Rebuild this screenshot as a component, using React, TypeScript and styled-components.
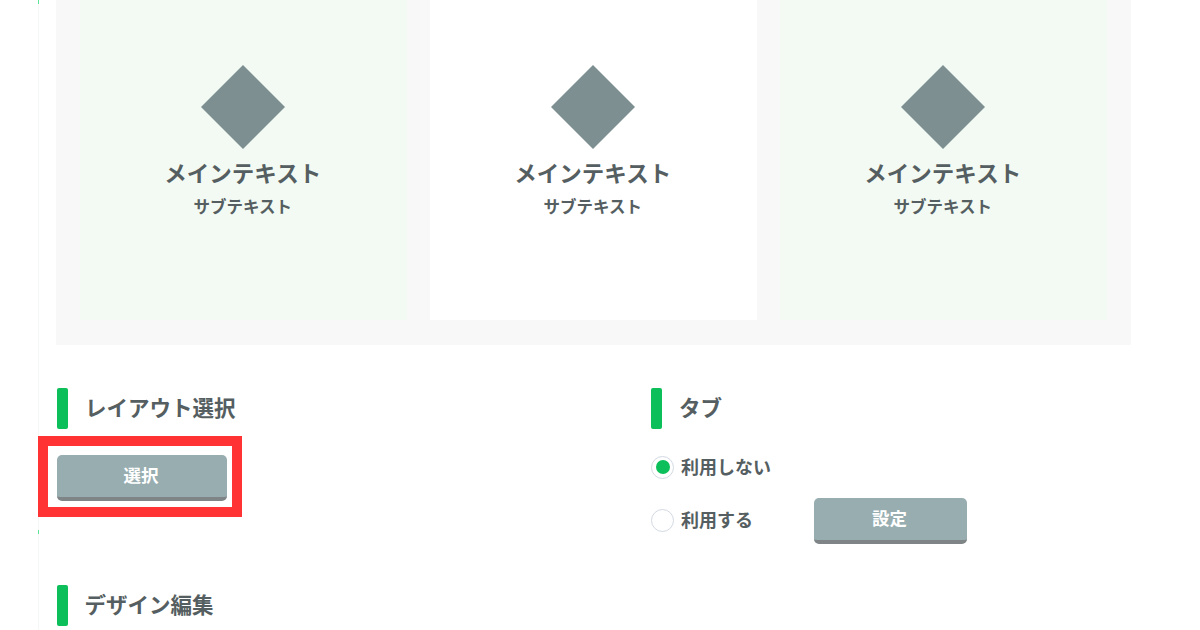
import styled, { createGlobalStyle } from "styled-components";

const GlobalStyle = createGlobalStyle`
  html, body {
    margin: 0;
    height: 630px;
    overflow: hidden;
    background: #fff;
    font-family: "Noto Sans CJK JP", "Noto Sans", sans-serif;
    color: #555e61;
  }
`;

const cards = [{ tinted: true }, { tinted: false }, { tinted: true }];

export default function App() {
  return (
    <Page>
      <GlobalStyle />
      <Main>
        <Panel>
          {cards.map((card, i) => (
            <Card key={i} $tinted={card.tinted}>
              <Diamond viewBox="0 0 84 84">
                <polygon points="42,0 84,42 42,84 0,42" fill="#7d8f91" />
              </Diamond>
              <MainText>メインテキスト</MainText>
              <SubText>サブテキスト</SubText>
            </Card>
          ))}
        </Panel>

        <Columns>
          <Column>
            <Heading>
              <Bar />
              <HeadingText>レイアウト選択</HeadingText>
            </Heading>
            <SelectButton>選択</SelectButton>
          </Column>
          <Column>
            <Heading>
              <Bar />
              <HeadingText>タブ</HeadingText>
            </Heading>
            <RadioRow>
              <Radio $checked />
              <RadioLabel>利用しない</RadioLabel>
            </RadioRow>
            <RadioRowWithButton>
              <RadioRow>
                <Radio />
                <RadioLabel>利用する</RadioLabel>
              </RadioRow>
              <SettingButton>設定</SettingButton>
            </RadioRowWithButton>
          </Column>
        </Columns>

        <DesignHeading>
          <Bar />
          <HeadingText>デザイン編集</HeadingText>
        </DesignHeading>

        <Highlight />
        <Speck $top={0} />
        <Speck $top={530} />
      </Main>
    </Page>
  );
}

const Page = styled.div`
  width: 1200px;
  height: 630px;
  overflow: hidden;
  padding-left: 38px;
  box-sizing: border-box;
`;

const Main = styled.div`
  position: relative;
  width: 1100px;
  height: 630px;
  border-left: 1px solid #f5f7f6;
  padding-left: 17px;
  box-sizing: border-box;
`;

const Panel = styled.div`
  width: 1075px;
  height: 345px;
  background: #f8f8f8;
  display: grid;
  grid-template-columns: 326.5px 326.5px 326.5px;
  column-gap: 23.5px;
  padding: 0 24px 25px 24px;
  box-sizing: border-box;
`;

const Card = styled.div<{ $tinted: boolean }>`
  background: ${(p) => (p.$tinted ? "#f3faf3" : "#ffffff")};
  display: flex;
  flex-direction: column;
  align-items: center;
  padding-top: 65px;
`;

const Diamond = styled.svg`
  width: 84px;
  height: 84px;
  display: block;
`;

const MainText = styled.div`
  margin-top: 7px;
  margin-right: 1px;
  font-size: 22.5px;
  line-height: 32px;
  font-weight: 700;
  white-space: nowrap;
`;

const SubText = styled.div`
  margin-top: 6px;
  margin-right: 1px;
  font-size: 16.5px;
  line-height: 24px;
  font-weight: 700;
  white-space: nowrap;
`;

const Columns = styled.div`
  display: flex;
  margin-top: 43px;
`;

const Column = styled.div`
  flex: 0 0 594px;
`;

const Heading = styled.div`
  display: flex;
  align-items: center;
  gap: 17.5px;
  height: 41px;
  padding-left: 1px;
`;

const DesignHeading = styled(Heading)`
  margin-top: 41px;
  gap: 17px;
`;

const Bar = styled.span`
  width: 10.5px;
  height: 41px;
  border-radius: 2px;
  background: #0cbf5a;
`;

const HeadingText = styled.div`
  font-size: 21.5px;
  line-height: 30px;
  font-weight: 700;
  white-space: nowrap;
  padding-bottom: 4px;
`;

const SelectButton = styled.button`
  display: block;
  width: 170px;
  height: 46px;
  margin: 26px 0 0 1px;
  border: 0;
  border-bottom: 4px solid #7f8586;
  border-radius: 5px;
  background: #97adb0;
  color: #fff;
  font-family: inherit;
  font-size: 17.5px;
  font-weight: 700;
  padding: 0 2px 4px 0;
`;

const SettingButton = styled(SelectButton)`
  width: 153px;
  margin: 0;
`;

const RadioRow = styled.div`
  display: flex;
  align-items: center;
  gap: 7px;
  margin-top: 26px;
  padding-left: 1px;
  height: 24px;
`;

const RadioRowWithButton = styled.div`
  display: flex;
  align-items: center;
  gap: 61px;
  width: 400px;
  margin-top: 19px;

  ${RadioRow} {
    margin: 0 0 2px;
  }
`;

const Radio = styled.span<{ $checked?: boolean }>`
  width: 23px;
  height: 23px;
  box-sizing: border-box;
  border-radius: 50%;
  border: 1.5px solid #d3dae3;
  background: #fff;
  display: flex;
  align-items: center;
  justify-content: center;

  &::after {
    content: "";
    display: ${(p) => (p.$checked ? "block" : "none")};
    width: 14px;
    height: 14px;
    border-radius: 50%;
    background: #0cbf5a;
  }
`;

const RadioLabel = styled.span`
  font-size: 18px;
  line-height: 24px;
  font-weight: 700;
  white-space: nowrap;
  padding-bottom: 2px;
`;

const Highlight = styled.div`
  position: absolute;
  left: -1px;
  top: 436px;
  width: 204px;
  height: 81px;
  box-sizing: border-box;
  border: 10px solid #ff3333;
`;

const Speck = styled.span<{ $top: number }>`
  position: absolute;
  left: -1px;
  top: ${(p) => p.$top}px;
  width: 1px;
  height: 4px;
  background: #5fe59a;
`;
